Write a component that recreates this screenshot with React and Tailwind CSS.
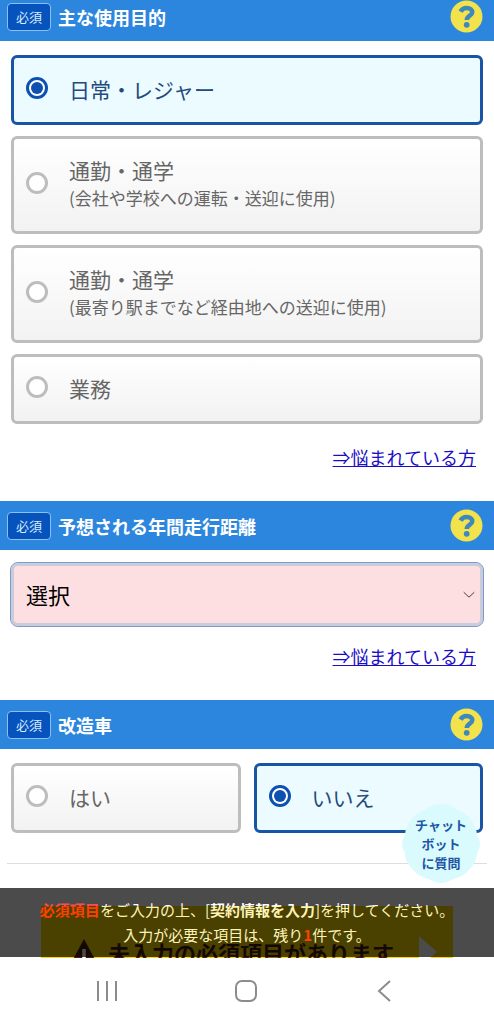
import { useState } from "react";

const PURPOSES = [
  { id: "leisure", title: "日常・レジャー" },
  { id: "commute", title: "通勤・通学", note: "(会社や学校への運転・送迎に使用)" },
  { id: "station", title: "通勤・通学", note: "(最寄り駅までなど経由地への送迎に使用)" },
  { id: "business", title: "業務" },
];

const MODIFIED = [
  { id: "yes", title: "はい" },
  { id: "no", title: "いいえ" },
];

function HelpIcon() {
  return (
    <svg viewBox="0 0 33 33" className="size-[33px]" aria-hidden="true">
      <circle cx="16.5" cy="16.5" r="16" fill="#f2e24b" />
      <path
        d="M10.6 11.6 C11.8 9.2 14 8 16.7 8 C20.2 8 22.2 9.8 22.2 12.2 C22.2 15.8 16.8 15.6 16.8 20"
        fill="none"
        stroke="#3f88bd"
        strokeWidth="4.6"
      />
      <circle cx="16.7" cy="24.8" r="2.9" fill="#3f88bd" />
    </svg>
  );
}

function SectionHeader({ title, first }) {
  return (
    <div
      className={`flex items-center bg-[#2d86dd] pb-2 pl-[7px] pr-[11px] ${
        first ? "pt-0" : "pt-2"
      }`}
    >
      <span className="flex h-7 items-center rounded border border-[#8cc0f5] bg-[#0653bd] px-2 text-[13px] text-[#d5ecff]">
        必須
      </span>
      <h2 className="ml-[7px] flex-1 text-lg font-bold leading-7 text-white">{title}</h2>
      <button type="button" aria-label="ヘルプ">
        <HelpIcon />
      </button>
    </div>
  );
}

function RadioCard({ name, option, checked, onChange }) {
  return (
    <label
      className={`flex flex-1 items-center rounded-md border-[3px] pb-[19px] pl-3 pt-[17px] ${
        checked
          ? "border-[#1855a5] bg-[#ebfbff] text-[#244a7c]"
          : "border-[#bdbdbd] bg-linear-to-b from-white to-[#f2f2f2] text-[#666]"
      }`}
    >
      <input
        type="radio"
        name={name}
        checked={checked}
        onChange={onChange}
        className="mb-0.5 size-[22px] shrink-0 appearance-none rounded-full border-[3px] border-[#bdbdbd] bg-white bg-clip-padding p-[2px] checked:border-[#0d50b0] before:block before:size-full before:rounded-full checked:before:bg-[#0d50b0]"
      />
      <span className="ml-[21px]">
        <span className="block text-[21px] leading-7">{option.title}</span>
        {option.note && <span className="block text-[17px] leading-7">{option.note}</span>}
      </span>
    </label>
  );
}

function HelpLink() {
  return (
    <div className="pb-[30px] pr-[18px] text-right text-lg leading-7">
      <a href="#help" className="text-[#1a0dc4] underline">
        ⇒悩まれている方
      </a>
    </div>
  );
}

function ChatBadge() {
  return (
    <button
      type="button"
      className="absolute bottom-[74px] right-[13px] flex size-20 items-center justify-center pb-0.5 text-[13px] font-bold leading-[19px] text-[#1c56a5]"
    >
      <svg viewBox="0 0 80 80" className="absolute inset-0" aria-hidden="true">
        <path
          d="M40 0 Q50 0 55 5 Q66 9 70 16 Q76 24 76 31 Q82 40 76 49 Q76 58 68 66 Q62 73 52 75 Q40 83 28 75 Q18 73 12 66 Q4 58 4 49 Q-2 40 4 31 Q4 24 10 16 Q14 9 25 5 Q30 0 40 0Z"
          fill="#dafbfe"
        />
      </svg>
      <span className="relative">
        チャット
        <br />
        ボット
        <br />
        に質問
      </span>
    </button>
  );
}

export default function App() {
  const [purpose, setPurpose] = useState("leisure");
  const [modified, setModified] = useState("no");
  const [distance, setDistance] = useState("");

  return (
    <div className="flex h-screen flex-col bg-white font-['Noto_Sans_CJK_JP',sans-serif]">
      <div className="relative flex-1 overflow-hidden">
        <SectionHeader title="主な使用目的" first />
        <div className="flex flex-col gap-[11px] px-[11px] pb-[19px] pt-[14px]">
          {PURPOSES.map((p) => (
            <RadioCard
              key={p.id}
              name="purpose"
              option={p}
              checked={purpose === p.id}
              onChange={() => setPurpose(p.id)}
            />
          ))}
        </div>
        <HelpLink />

        <SectionHeader title="予想される年間走行距離" />
        <div className="px-[10px] pb-[15px] pt-3">
          <div className="relative rounded-lg border border-[#7b9bc8] bg-[#cacbdc]">
            <select
              aria-label="予想される年間走行距離"
              value={distance}
              onChange={(e) => setDistance(e.target.value)}
              className="block h-[63px] w-full appearance-none rounded-[7px] border-[3px] border-[#cacbdc] bg-[#fedfe1] px-3 text-[22px] text-black"
            >
              <option value="">選択</option>
              <option value="3000">3,000km以下</option>
              <option value="5000">5,000km以下</option>
              <option value="10000">10,000km以下</option>
            </select>
            <svg
              viewBox="0 0 12 8"
              className="pointer-events-none absolute right-2 top-7 h-2 w-3"
              fill="none"
              stroke="#4a3c40"
              aria-hidden="true"
            >
              <path d="M.7 1.2 L6 6.2 L11.3 1.2" />
            </svg>
          </div>
        </div>
        <HelpLink />

        <SectionHeader title="改造車" />
        <div className="flex gap-[13px] px-[11px] pb-[30px] pt-[14px]">
          {MODIFIED.map((m) => (
            <RadioCard
              key={m.id}
              name="modified"
              option={m}
              checked={modified === m.id}
              onChange={() => setModified(m.id)}
            />
          ))}
        </div>
        <hr className="mx-[7px] border-[#dedede]" />

        <button
          type="button"
          className="mx-[41px] mt-[42px] flex h-[92px] w-[calc(100%-82px)] items-center bg-[#fad900] pl-[29px] text-[#4a1c10]"
        >
          <svg viewBox="0 0 28 26" className="h-7 w-7 shrink-0" aria-hidden="true">
            <path d="M14 0 L28 26 H0Z" fill="currentColor" />
            <path d="M14 10 V19 M14 21 V24" stroke="#fff" strokeWidth="3.5" />
          </svg>
          <span className="ml-[10px] flex-1 whitespace-nowrap text-left text-[22px] font-bold">
            未入力の必須項目があります
          </span>
          <svg viewBox="0 0 18 32" className="mr-4 h-8 w-[18px] shrink-0" aria-hidden="true">
            <path d="M0 0 L18 16 L0 32Z" fill="#fff" />
          </svg>
        </button>

        <div className="absolute inset-x-0 bottom-px bg-black pb-[10px] pt-[9px] text-center text-[15px] leading-[25px] text-white opacity-70">
          <p className="whitespace-nowrap">
            <strong className="text-[#ff0000]">必須項目</strong>をご入力の上、[
            <strong>契約情報を入力</strong>]を押してください。
          </p>
          <p>
            入力が必要な項目は、残り<strong className="text-[#ff0000]">1</strong>件です。
          </p>
        </div>
        <ChatBadge />
      </div>

      <nav className="flex h-[66px] items-center justify-between pl-[94px] pr-[96px] text-[#8c8c8c]">
        <button type="button" aria-label="履歴">
          <svg viewBox="0 0 26 26" className="size-[26px]" fill="none" stroke="currentColor" strokeWidth="2">
            <path d="M4 3 V23 M13 3 V23 M22 3 V23" />
          </svg>
        </button>
        <button type="button" aria-label="ホーム">
          <svg viewBox="0 0 26 26" className="size-[26px]" fill="none" stroke="currentColor" strokeWidth="2">
            <rect x="3" y="3" width="20" height="20" rx="6" />
          </svg>
        </button>
        <button type="button" aria-label="戻る">
          <svg viewBox="0 0 26 26" className="size-[26px]" fill="none" stroke="currentColor" strokeWidth="2">
            <path d="M18 3 L7 13 L18 23" />
          </svg>
        </button>
      </nav>
    </div>
  );
}
